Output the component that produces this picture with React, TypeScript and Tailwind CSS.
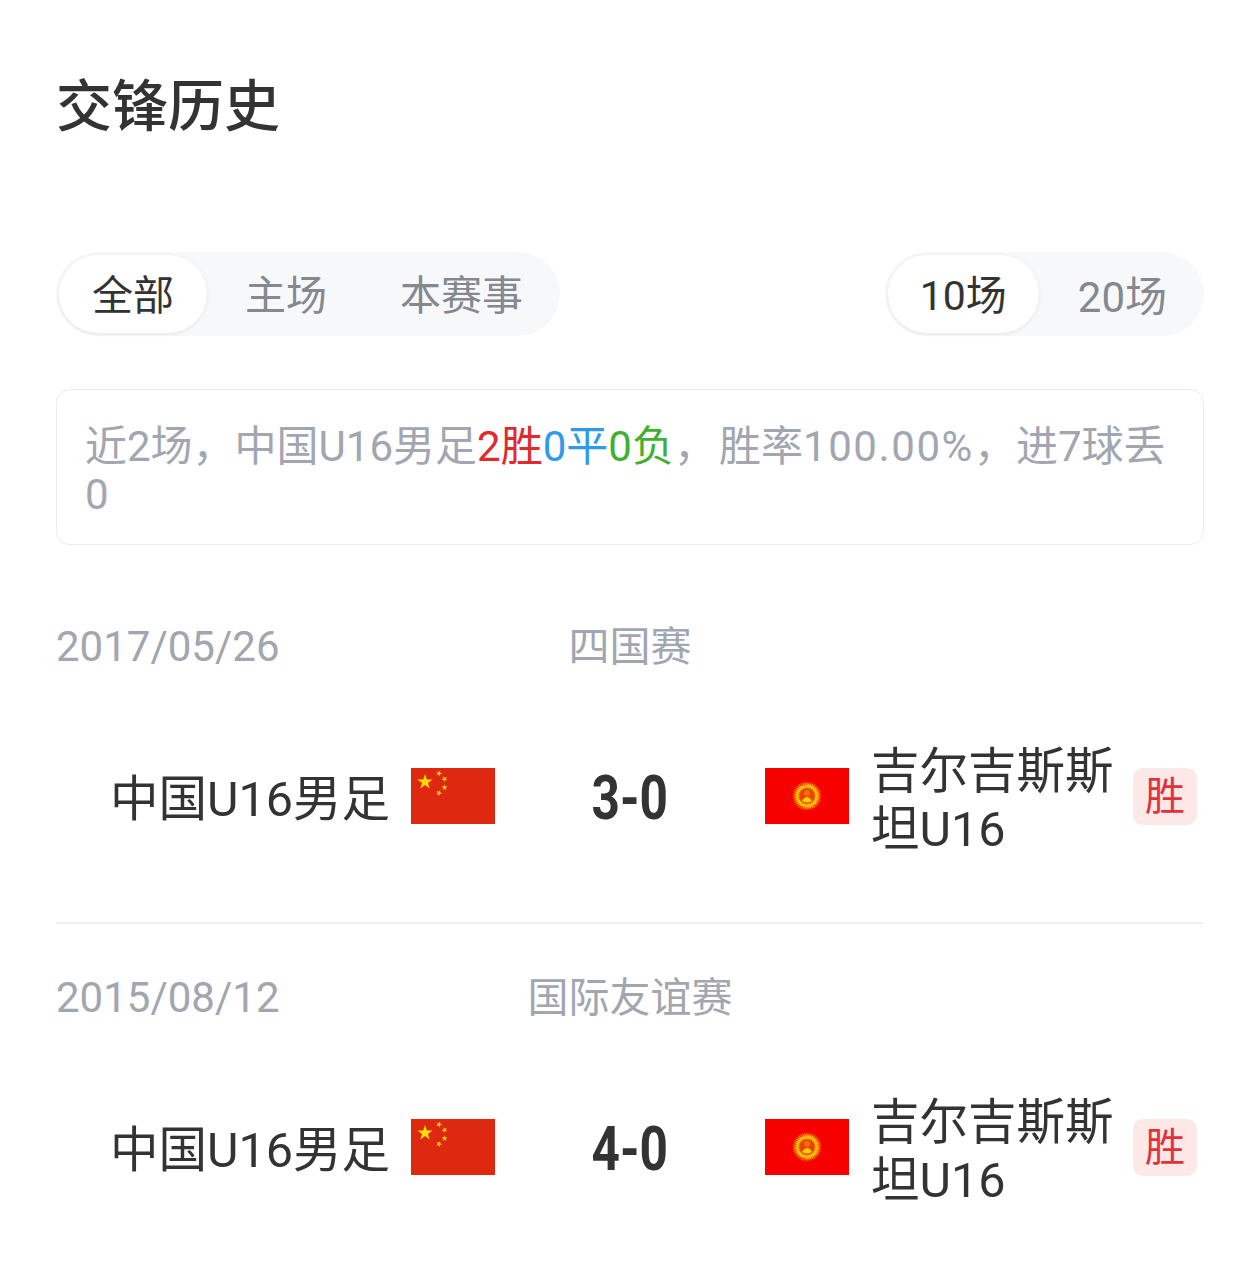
const CJK = "font-['Roboto','Noto_Sans_CJK_SC',sans-serif]";

const MATCHES = [
  { date: "2017/05/26", league: "四国赛", score: "3-0" },
  { date: "2015/08/12", league: "国际友谊赛", score: "4-0" },
];

function ChinaFlag() {
  const star = "M0,-1 L0.225,-0.309 L0.951,-0.309 L0.363,0.118 L0.588,0.809 L0,0.382 L-0.588,0.809 L-0.363,0.118 L-0.951,-0.309 L-0.225,-0.309 Z";
  return (
    <svg width="84" height="56" viewBox="0 0 84 56" className="shrink-0">
      <rect width="84" height="56" fill="#de2910" />
      <path d={star} fill="#ffde00" transform="translate(14 14) scale(8)" />
      <path d={star} fill="#ffd21f" transform="translate(28 5.500) rotate(23) scale(3.200)" />
      <path d={star} fill="#ffd21f" transform="translate(33.500 11) rotate(45) scale(3.200)" />
      <path d={star} fill="#ffd21f" transform="translate(33.500 19.500) rotate(0) scale(3.200)" />
      <path d={star} fill="#ffd21f" transform="translate(28 25) rotate(23) scale(3.200)" />
    </svg>
  );
}

function KyrgyzFlag() {
  const rays = Array.from({ length: 40 }, (_, i) => (i * 360) / 40);
  return (
    <svg width="84" height="56" viewBox="0 0 84 56" className="shrink-0">
      <rect width="84" height="56" fill="#f70000" />
      {rays.map((a) => (
        <path key={a} d="M-1.100,-9 L0,-15 L1.100,-9 Z" fill="#ffc800" transform={`translate(42 28) rotate(${a})`} />
      ))}
      <circle cx="42" cy="28" r="10.500" fill="#ffb800" />
      <circle cx="42" cy="28" r="8" fill="#f04000" stroke="#d08000" strokeWidth="1" />
      <path d="M37,33 Q42,25 47,33 Q42,36 37,33 Z" fill="#ffd000" />
      <circle cx="42" cy="25" r="3" fill="#f07000" />
    </svg>
  );
}

function MatchRow({ date, league, score }: { date: string; league: string; score: string }) {
  return (
    <div>
      <div className="grid grid-cols-[1fr_auto_1fr] items-center pt-[1px] text-[41px] leading-[48px] text-[#a2a6b0]">
        <span className="text-[42px]">{date}</span>
        <span>{league}</span>
        <span />
      </div>
      <div className="mt-[68px] flex h-[114px] items-center">
        <div className="flex w-[439px] shrink-0 items-center justify-end gap-[21px]">
          <span className="pt-[6px] text-[48.5px] leading-[57px] text-[#333333]">中国U16男足</span>
          <ChinaFlag />
        </div>
        <div className="flex w-[270px] shrink-0 justify-center">
          <span className="inline-block scale-x-[0.8] pt-[2px] text-[62px] leading-[57px] font-bold text-[#333333]">{score}</span>
        </div>
        <KyrgyzFlag />
        <span className="ml-[22px] w-[246px] pt-[10px] text-[48.5px] leading-[58px] text-[#333333]">吉尔吉斯斯坦U16</span>
        <span className="ml-[16px] flex h-[57px] w-[64px] items-center justify-center rounded-[10px] bg-[#fde8e8] pt-[2px] text-[40px] text-[#e0323c]">胜</span>
      </div>
    </div>
  );
}

export default function App() {
  return (
    <div className={`${CJK} h-[1267px] w-[1260px] overflow-hidden bg-white px-[56px]`}>
      <h1 className="pt-[74px] text-[56px] leading-[66px] font-medium text-[#333333]">交锋历史</h1>

      <div className="mt-[112px] flex justify-between">
        <div className="flex h-[84px] items-center rounded-full bg-[#f7f8fa] p-[3px] text-[41px] text-[#85888f]">
          <span className="flex h-[78px] w-[148px] items-center justify-center rounded-full bg-white pt-[6px] text-[#333333] shadow-[0_1px_4px_rgba(0,0,0,0.08)]">全部</span>
          <span className="ml-[38px] pt-[6px]">主场</span>
          <span className="mr-[34px] ml-[73px] pt-[6px]">本赛事</span>
        </div>
        <div className="flex h-[84px] items-center rounded-full bg-[#f7f8fa] p-[3px] text-[41px] text-[#85888f]">
          <span className="flex h-[78px] w-[151px] items-center justify-center rounded-full bg-white pt-[6px] text-[#333333] shadow-[0_1px_4px_rgba(0,0,0,0.08)]">10场</span>
          <span className="mr-[34px] ml-[39px] pt-[6px] text-[42px]">20场</span>
        </div>
      </div>

      <div className="mt-[53px] rounded-[14px] border border-[#ececef] px-[28px] pt-[33px] pb-[25px] text-[42px] leading-[48px] text-[#a2a6b0]">
        近2场，中国U16男足<span className="text-[#e02b2b]">2胜</span><span className="text-[#2f9be8]">0平</span><span className="text-[#3fb02f]">0负</span>，<span className="ml-[3px]">胜率</span><span className="tracking-[1.6px]">100.00%</span>，进7球丢<br />0
      </div>

      <div className="mt-[77px]">
        <MatchRow {...MATCHES[0]} />
      </div>
      <div className="mt-[69px] border-t-2 border-[#f0f0f2] pt-[49px]">
        <MatchRow {...MATCHES[1]} />
      </div>
    </div>
  );
}
